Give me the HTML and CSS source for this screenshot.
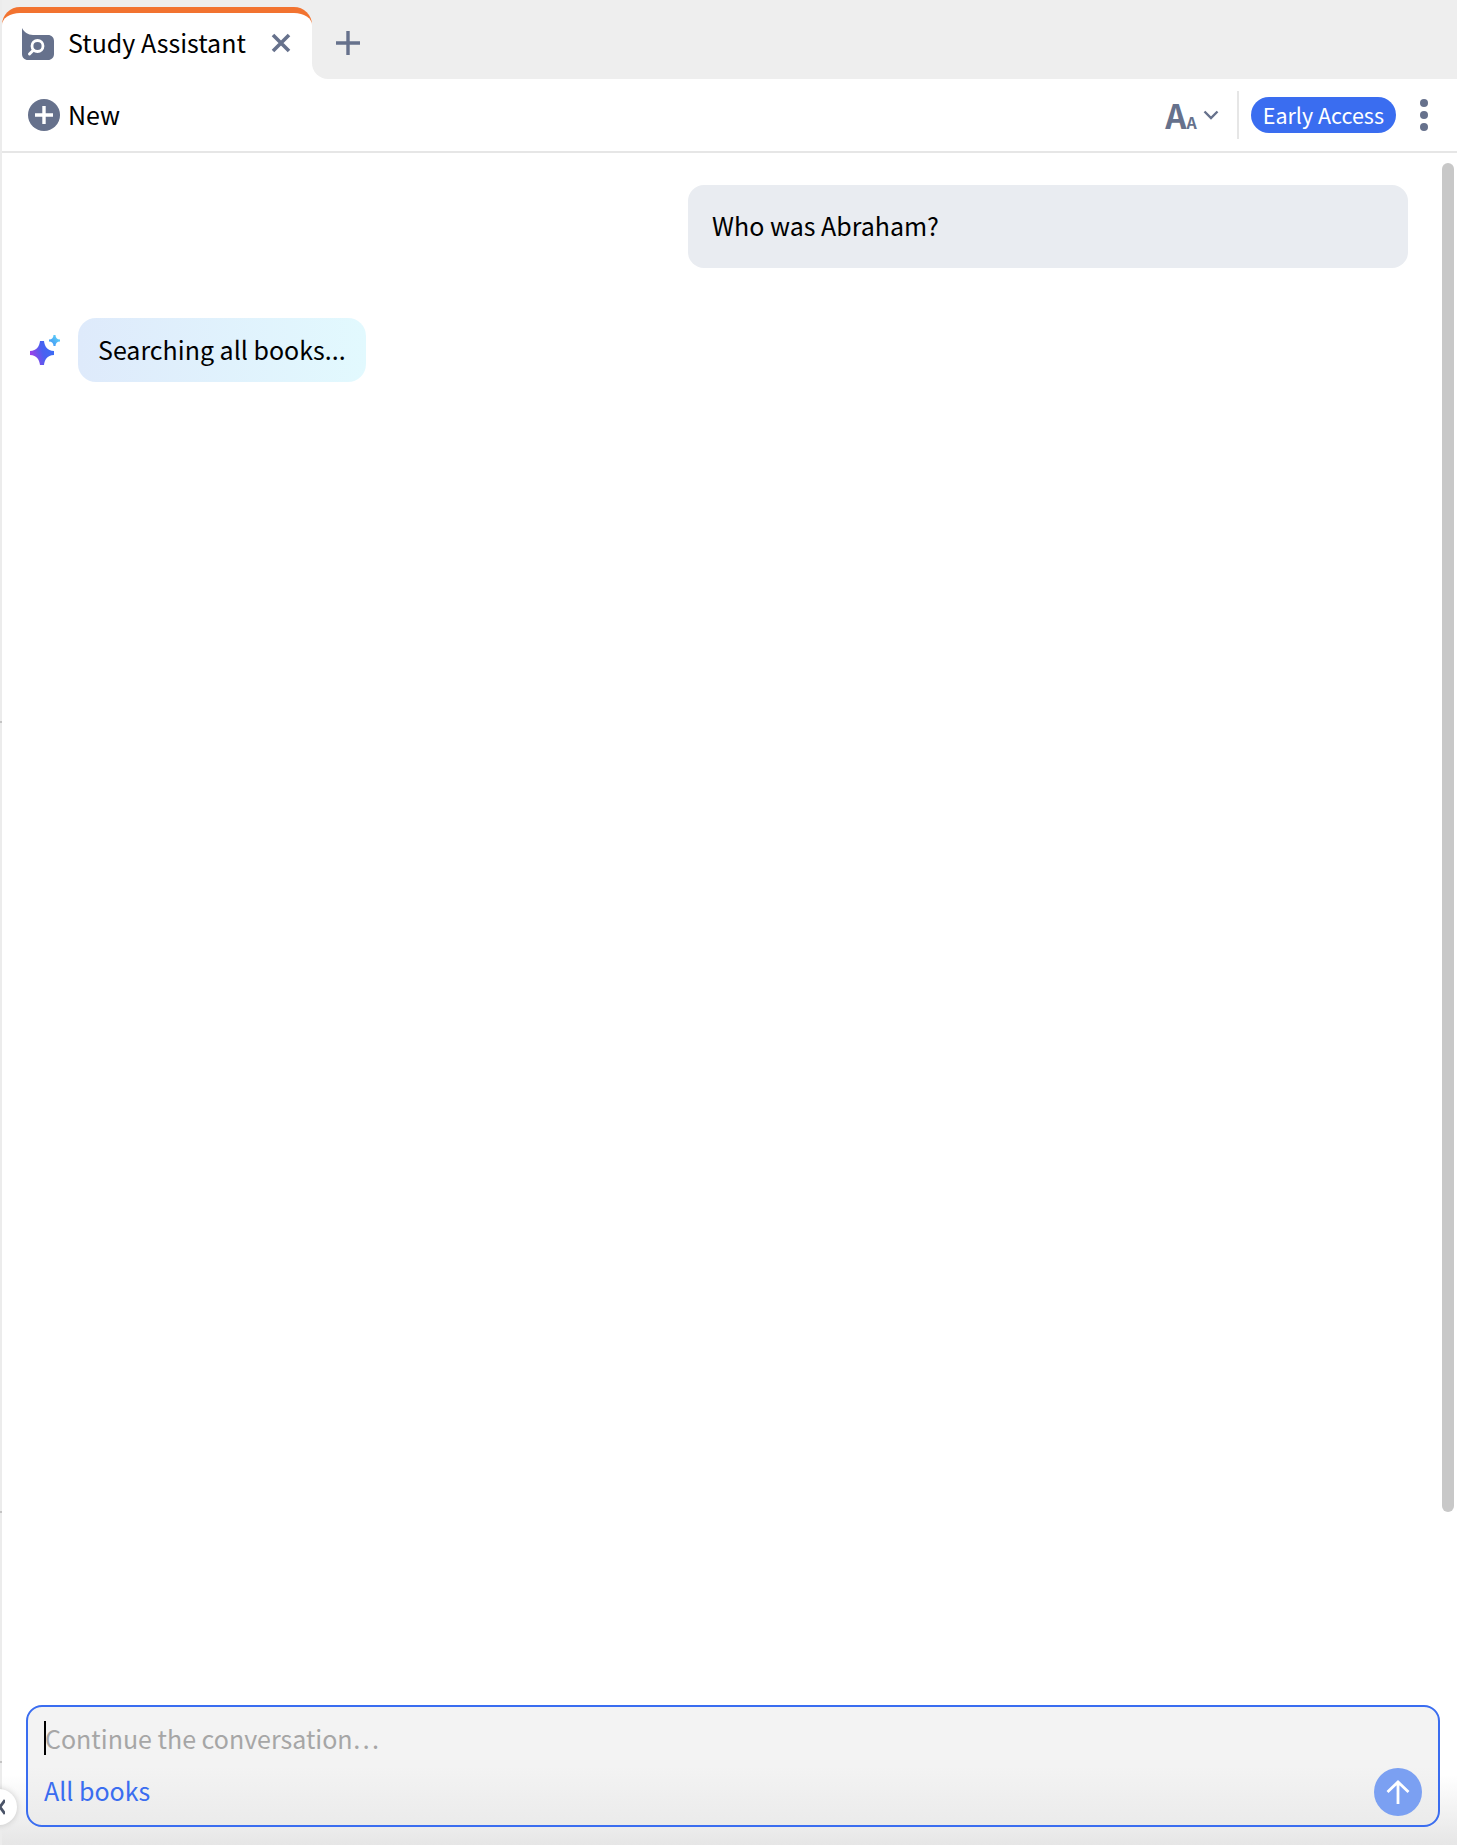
FILE: index.html
```html
<!DOCTYPE html>
<html lang="en">
<head>
    <meta charset="UTF-8">
    <title>Study Assistant</title>
    <link rel="stylesheet" href="styles.css">
</head>
<body>
    <div class="app">
        <div class="tabbar">
            <div class="tab">
                <svg class="tab-logo" width="32" height="32" viewBox="0 0 32 32">
                    <path d="M0 0C2 4 6 7 11 7H26C29.500 7 32 9.500 32 13V26C32 29.500 29.500 32 26 32H6C2.500 32 0 29.500 0 26Z" fill="#66718c"/>
                    <circle cx="15.500" cy="18" r="5.500" fill="none" stroke="#fff" stroke-width="2.800"/>
                    <path d="M11.500 22L7.500 26" stroke="#fff" stroke-width="3" stroke-linecap="round"/>
                </svg>
                <span class="tab-title">Study Assistant</span>
                <svg class="tab-close" width="20" height="20" viewBox="0 0 20 20">
                    <path d="M2 2L18 18M18 2L2 18" stroke="#66718c" stroke-width="3.600"/>
                </svg>
            </div>
            <div class="tabbar-rest">
                <button class="tab-add">
                    <svg width="24" height="24" viewBox="0 0 24 24">
                        <path d="M12 0V24M0 12H24" stroke="#66718c" stroke-width="3.400"/>
                    </svg>
                </button>
            </div>
        </div>

        <div class="toolbar">
            <button class="new-btn">
                <svg width="32" height="32" viewBox="0 0 32 32">
                    <circle cx="16" cy="16" r="16" fill="#66718c"/>
                    <path d="M16 7V25M7 16H25" stroke="#fff" stroke-width="3.400"/>
                </svg>
                <span class="new-label">New</span>
            </button>
            <div class="toolbar-right">
                <div class="font-size">
                    <span class="font-big">A</span><span class="font-small">A</span>
                    <svg width="16" height="10" viewBox="0 0 16 10">
                        <path d="M1.500 1.500L8 8L14.500 1.500" fill="none" stroke="#66718c" stroke-width="2.400"/>
                    </svg>
                </div>
                <div class="toolbar-sep"></div>
                <span class="badge">Early Access</span>
                <div class="more">
                    <i></i><i></i><i></i>
                </div>
            </div>
        </div>

        <div class="chat">
            <div class="msg-user">Who was Abraham?</div>
            <div class="msg-bot">
                <svg width="30" height="30" viewBox="0 0 30 30">
                    <defs>
                        <linearGradient id="spark-big" x1="0" y1="0.700" x2="1" y2="0.400">
                            <stop offset="0" stop-color="#a83ce6"/>
                            <stop offset="0.550" stop-color="#4a60f0"/>
                            <stop offset="1" stop-color="#3b6cf5"/>
                        </linearGradient>
                        <linearGradient id="spark-small" x1="0" y1="1" x2="1" y2="0">
                            <stop offset="0" stop-color="#3f8cf5"/>
                            <stop offset="1" stop-color="#62dcf8"/>
                        </linearGradient>
                    </defs>
                    <path d="M10 6H14C14.500 11 17 15.500 24 16V20C17 20.500 14.500 25 14 30H10C9.500 25 7 20.500 0 20V16C7 15.500 9.500 11 10 6Z" fill="url(#spark-big)"/>
                    <path d="M23.500 0H25.500C25.500 2.500 27 4.500 30 4.500V6.500C27 6.500 25.500 8.500 25.500 11H23.500C23.500 8.500 22 6.500 19 6.500V4.500C22 4.500 23.500 2.500 23.500 0Z" fill="url(#spark-small)"/>
                </svg>
                <div class="bot-bubble">Searching all books...</div>
            </div>
        </div>

        <div class="composer-wrap">
            <div class="composer">
                <div class="composer-input"><span class="caret"></span>Continue the conversation…</div>
                <div class="composer-foot">
                    <a class="scope" href="#">All books</a>
                    <button class="send">
                        <svg width="26" height="26" viewBox="0 0 26 26">
                            <path d="M13 25V3M2.500 13L13 3L23.500 13" fill="none" stroke="#fff" stroke-width="2.800"/>
                        </svg>
                    </button>
                </div>
            </div>
        </div>

        <div class="scrollbar"></div>
        <span class="edge-tick tick-a"></span>
        <span class="edge-tick tick-b"></span>
        <span class="edge-tick tick-c"></span>
        <button class="collapse">
            <svg width="10" height="16" viewBox="0 0 10 16">
                <path d="M10 1L5 8L10 15" fill="none" stroke="#4b5468" stroke-width="2.800"/>
            </svg>
        </button>
    </div>
</body>
</html>
```

FILE: styles.css
```css
* {
    box-sizing: border-box;
}
html, body {
    margin: 0;
    height: 100%;
    overflow: hidden;
}
body {
    font-family: "Noto Sans CJK SC", "Noto Sans", sans-serif;
    font-size: 25px;
    color: #000;
    background-color: #fff;
}
button {
    font: inherit;
    border: none;
    background: none;
    padding: 0;
}
.app {
    position: relative;
    display: flex;
    flex-direction: column;
    height: 1845px;
    border-left: 2px solid #ececec;
}

/* tabs */
.tabbar {
    display: flex;
    align-items: stretch;
    height: 79px;
    background-image: linear-gradient(180deg, #eeeeee 30px, #fff 30px);
}
.tab {
    display: flex;
    align-items: center;
    width: 310px;
    margin-top: 7px;
    padding: 0 0 8px 20px;
    background-color: #fff;
    border-top: 6px solid #f27330;
    border-radius: 18px 18px 0 0;
}
.tab-logo {
    flex: none;
    margin-top: 3px;
}
.tab-title {
    margin-left: 14px;
    line-height: 1;
}
.tab-close {
    flex: none;
    margin-top: 2px;
    margin-left: 25px;
}
.tabbar-rest {
    flex: 1;
    display: flex;
    align-items: center;
    padding-left: 24px;
    background-color: #eeeeee;
    border-bottom-left-radius: 16px;
}
.tab-add {
    display: flex;
    margin-top: 7px;
}

/* toolbar */
.toolbar {
    display: flex;
    align-items: center;
    justify-content: space-between;
    height: 74px;
    padding: 0 29px 0 26px;
    border-bottom: 2px solid #e6e6e6;
}
.new-btn {
    display: flex;
    align-items: center;
    gap: 8px;
}
.new-label {
    margin-top: -2px;
}
.toolbar-right {
    display: flex;
    align-items: center;
}
.font-size {
    display: flex;
    align-items: baseline;
    color: #66718c;
    font-weight: bold;
}
.font-big {
    font-size: 33px;
    line-height: 1;
}
.font-small {
    font-size: 16px;
    line-height: 1;
}
.font-size svg {
    align-self: center;
    margin-left: 6px;
}
.toolbar-sep {
    width: 2px;
    height: 48px;
    margin: 0 12px 0 18px;
    background-color: #e6e6e6;
}
.badge {
    height: 36px;
    padding: 0 12px;
    border-radius: 18px;
    background-color: #3a6df0;
    color: #fff;
    font-size: 21.500px;
    line-height: 35px;
}
.more {
    display: flex;
    flex-direction: column;
    gap: 4px;
    margin-left: 24px;
}
.more i {
    width: 8px;
    height: 8px;
    border-radius: 50%;
    background-color: #66718c;
}

/* messages */
.chat {
    flex: 1;
    padding: 32px 49px 0 26px;
}
.msg-user {
    width: 720px;
    height: 83px;
    margin-left: auto;
    padding-left: 24px;
    border-radius: 16px;
    background-color: #e9ecf1;
    line-height: 81px;
}
.msg-bot {
    display: flex;
    align-items: center;
    gap: 18px;
    margin-top: 50px;
    margin-left: 2px;
}
.bot-bubble {
    height: 64px;
    padding: 0 20px;
    border-radius: 18px;
    background-image: linear-gradient(90deg, #deeafb, #e2f9fe);
    line-height: 62px;
}

/* input box */
.composer-wrap {
    padding: 0 17px 18px 24px;
    background-image: linear-gradient(180deg, #fff 70px, #e6e6e6);
}
.composer {
    height: 122px;
    padding: 13px 16px 0 16px;
    border: 2px solid #3a6df0;
    border-radius: 16px;
    background-image: linear-gradient(180deg, #f3f3f3 50%, #ebebeb);
}
.composer-input {
    display: flex;
    align-items: center;
    height: 36px;
    color: #a6a6a6;
    line-height: 36px;
}
.caret {
    width: 2px;
    height: 34px;
    margin-right: -1px;
    background-color: #000;
}
.composer-foot {
    display: flex;
    align-items: center;
    justify-content: space-between;
    margin-top: 12px;
}
.scope {
    margin-bottom: 4px;
    color: #3a6df0;
    text-decoration: none;
}
.send {
    display: flex;
    align-items: center;
    justify-content: center;
    width: 48px;
    height: 48px;
    border-radius: 50%;
    background-color: #7ba0f2;
}

/* overlays */
.scrollbar {
    position: absolute;
    top: 163px;
    left: 1440px;
    width: 12px;
    height: 1349px;
    border-radius: 6px;
    background-color: #c8c8c8;
}
.edge-tick {
    position: absolute;
    left: -2px;
    width: 2px;
    height: 2px;
    background-color: #c4c4c4;
}
.tick-a {
    top: 721px;
}
.tick-b {
    top: 1511px;
}
.tick-c {
    top: 1761px;
}
.collapse {
    position: absolute;
    top: 1789px;
    left: -21px;
    width: 36px;
    height: 36px;
    border-radius: 50%;
    background-color: #fff;
    box-shadow: 0 0 6px rgba(0, 0, 0, 0.18);
    display: flex;
    align-items: center;
    justify-content: flex-end;
    padding-right: 12px;
}
```
